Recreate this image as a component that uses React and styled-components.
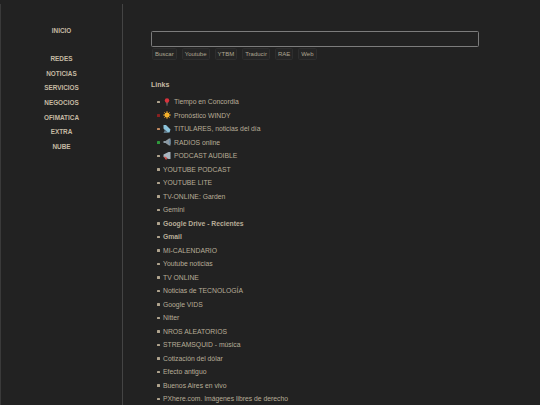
import React from "react";
import styled, { createGlobalStyle } from "styled-components";

const TEXT = "#b8ad98";

const GlobalStyle = createGlobalStyle`
  html, body {
    margin: 0;
    height: 405px;
    overflow: hidden;
    background: #222222;
  }
  body {
    font-family: "Liberation Sans", Arial, sans-serif;
    color: ${TEXT};
  }
`;

const Page = styled.div`
  display: flex;
  align-items: stretch;
  height: 405px;
  overflow: hidden;
`;

const Sidebar = styled.nav`
  box-sizing: border-box;
  width: 123px;
  margin-top: 4px;
  padding-top: 20px;
  border-left: 1px solid #3a3a3a;
  border-right: 1px solid #444444;
  display: flex;
  flex-direction: column;
  align-items: center;
`;

const NavLink = styled.a`
  height: 14.7px;
  line-height: 14.7px;
  font-size: 6.4px;
  font-weight: bold;
  color: #c6baa4;
  margin-bottom: ${(props) => (props.$home ? "13.3px" : "0")};
`;

const Main = styled.main`
  flex: 1;
  padding: 31px 0 0 28px;
`;

const SearchInput = styled.input`
  display: block;
  box-sizing: border-box;
  width: 328px;
  height: 16px;
  background: transparent;
  border: 1px solid #7c7c7c;
  border-radius: 1.5px;
  outline: none;
`;

const ButtonRow = styled.div`
  display: flex;
  gap: 5px;
  margin: 1px 0 0 1px;
`;

const SearchButton = styled.button`
  height: 12px;
  padding: 0 2px;
  background: #252525;
  border: 1px solid #2e2e2e;
  border-radius: 1.5px;
  color: #aea592;
  font-family: inherit;
  font-size: 6px;
`;

const Heading = styled.h2`
  margin: 21px 0 7px;
  font-size: 7px;
  font-weight: bold;
  color: #c6baa4;
`;

const LinkList = styled.ul`
  list-style: none;
  margin: 0;
  padding: 0 0 0 6px;
`;

const Item = styled.li`
  display: flex;
  align-items: center;
  height: 13.5px;
  font-size: 6.8px;
  font-weight: ${(props) => (props.$bold ? "bold" : "normal")};
  white-space: nowrap;

  &::before {
    content: "";
    width: 2.5px;
    height: 2.5px;
    margin-right: 3.5px;
    border-radius: 0.5px;
    background: ${(props) => props.$bullet || "#b0a48e"};
  }
`;

const Glyph = styled.svg`
  width: 8px;
  height: 8px;
  margin-right: 3px;
  flex: none;
`;

const PinIcon = () => (
  <Glyph viewBox="0 0 16 16">
    <path d="M7 8h2l-.6 8h-.8z" fill="#9a9a9a" />
    <circle cx="8" cy="5" r="4.5" fill="#d8323c" />
  </Glyph>
);

const SunIcon = () => (
  <Glyph viewBox="0 0 16 16">
    <circle cx="8" cy="8" r="5" fill="#f7c531" />
    <path d="M8 0v16M0 8h16M2.500 2.500l11 11M13.500 2.500l-11 11" stroke="#f2a428" strokeWidth="1.6" />
  </Glyph>
);

const DishIcon = () => (
  <Glyph viewBox="0 0 16 16">
    <path d="M1 0h5l9 9-2 6H8L1 7z" fill="#8cc4dc" />
    <path d="M4 9l-3 7h10z" fill="#5f7684" />
  </Glyph>
);

const SpeakerIcon = () => (
  <Glyph viewBox="0 0 16 16">
    <path d="M1 6h4l7-5h3v14h-3l-7-5H1z" fill="#8d9aa3" />
    <path d="M12 4h3v8h-3z" fill="#6f8fa8" />
  </Glyph>
);

const MegaphoneIcon = () => (
  <Glyph viewBox="0 0 16 16">
    <path d="M1 5l10-5h4v14h-4L1 10z" fill="#a9b6c0" />
    <path d="M2 9l3 6h3l-1-5z" fill="#d8504a" />
  </Glyph>
);

const NAV_ITEMS = ["REDES", "NOTICIAS", "SERVICIOS", "NEGOCIOS", "OFIMATICA", "EXTRA", "NUBE"];
const BUTTONS = ["Buscar", "Youtube", "YTBM", "Traducir", "RAE", "Web"];

const LINKS = [
  { label: "Tiempo en Concordia", icon: PinIcon },
  { label: "Pronóstico WINDY", icon: SunIcon, bullet: "#8a2020" },
  { label: "TITULARES, noticias del día", icon: DishIcon, bullet: "#c08a60" },
  { label: "RADIOS online", icon: SpeakerIcon, bullet: "#2f9a3c" },
  { label: "PODCAST AUDIBLE", icon: MegaphoneIcon },
  { label: "YOUTUBE PODCAST" },
  { label: "YOUTUBE LITE" },
  { label: "TV-ONLINE: Garden" },
  { label: "Gemini" },
  { label: "Google Drive - Recientes", bold: true },
  { label: "Gmail", bold: true },
  { label: "MI-CALENDARIO" },
  { label: "Youtube noticias" },
  { label: "TV ONLINE" },
  { label: "Noticias de TECNOLOGÍA" },
  { label: "Google VIDS" },
  { label: "Nitter" },
  { label: "NROS ALEATORIOS" },
  { label: "STREAMSQUID - música" },
  { label: "Cotización del dólar" },
  { label: "Efecto antiguo" },
  { label: "Buenos Aires en vivo" },
  { label: "PXhere.com. Imágenes libres de derecho" },
];

export default function App() {
  return (
    <Page>
      <GlobalStyle />
      <Sidebar>
        <NavLink $home>INICIO</NavLink>
        {NAV_ITEMS.map((item) => (
          <NavLink key={item}>{item}</NavLink>
        ))}
      </Sidebar>
      <Main>
        <SearchInput type="text" />
        <ButtonRow>
          {BUTTONS.map((label) => (
            <SearchButton key={label}>{label}</SearchButton>
          ))}
        </ButtonRow>
        <Heading>Links</Heading>
        <LinkList>
          {LINKS.map(({ label, icon: Icon, bullet, bold }) => (
            <Item key={label} $bullet={bullet} $bold={bold}>
              {Icon && <Icon />}
              {label}
            </Item>
          ))}
        </LinkList>
      </Main>
    </Page>
  );
}
